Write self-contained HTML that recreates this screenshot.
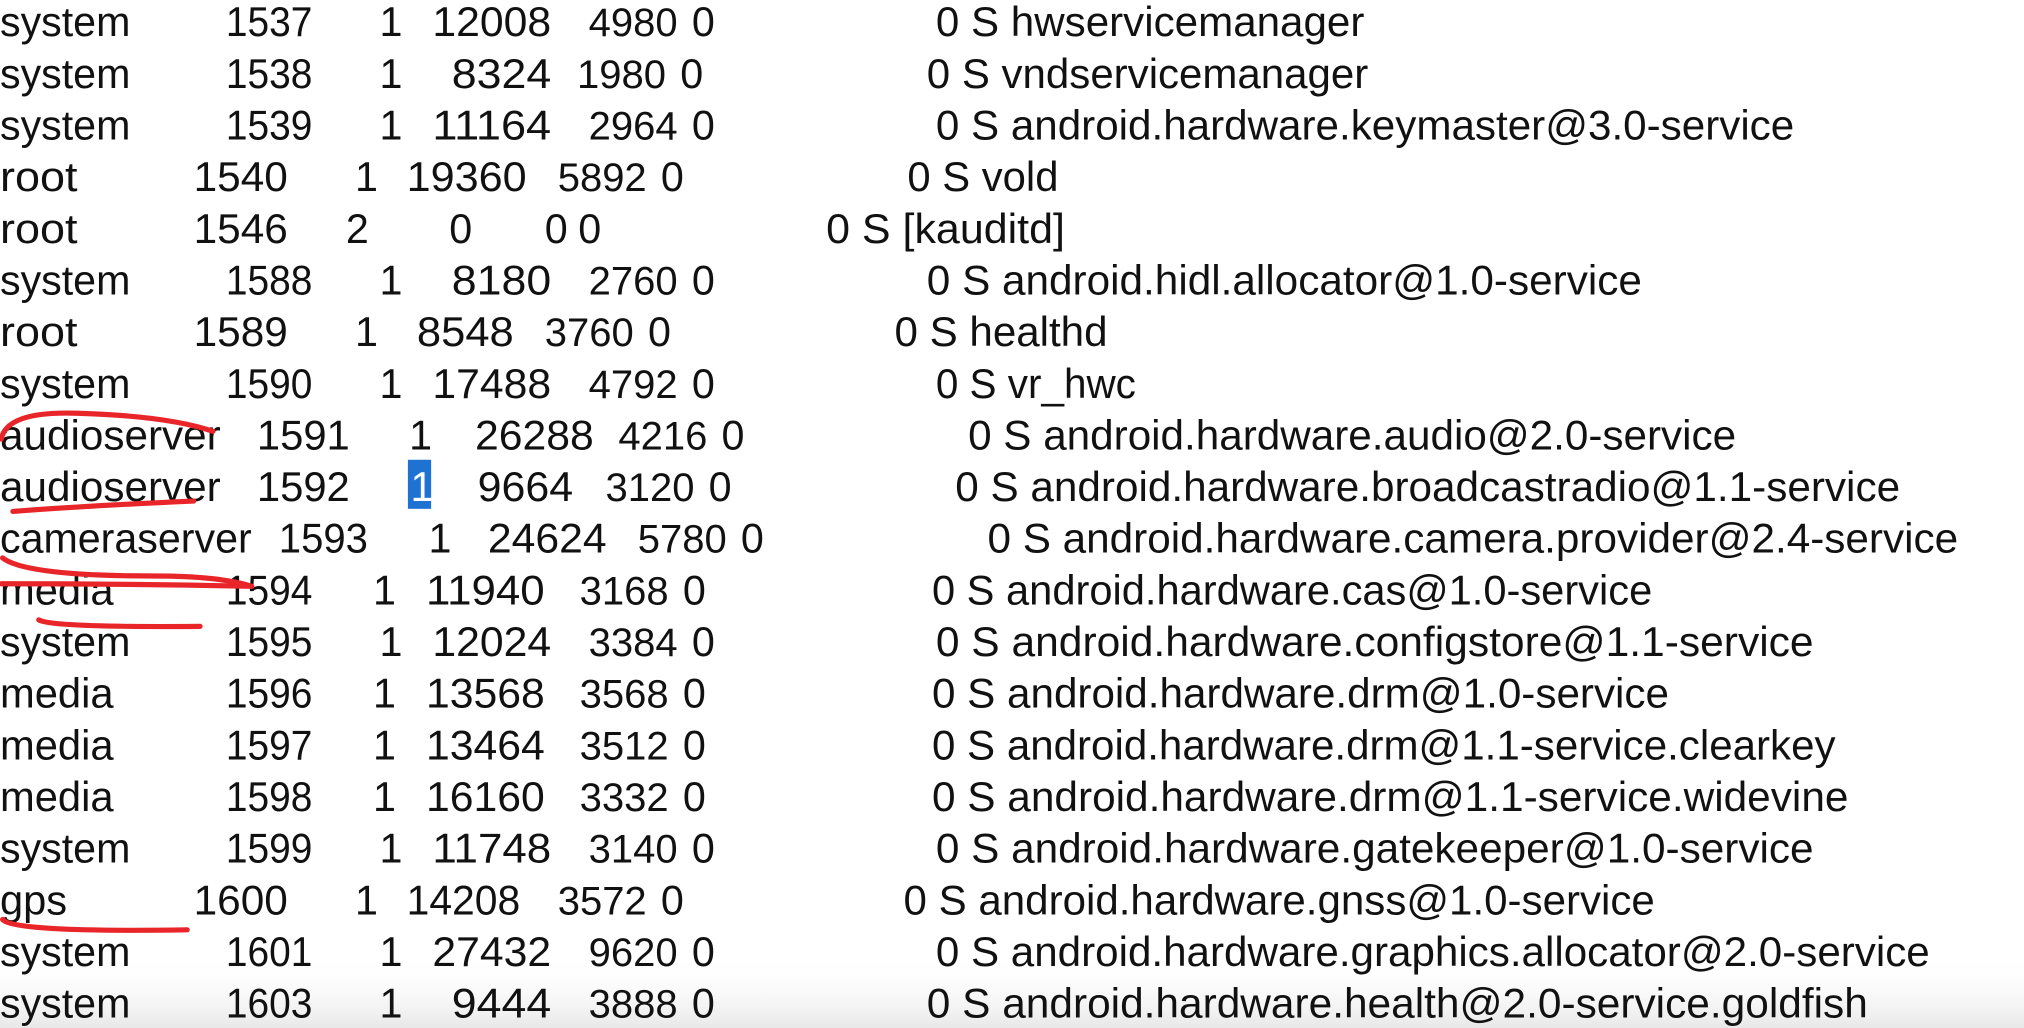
<!DOCTYPE html>
<html><head><meta charset="utf-8"><style>
html,body{margin:0;padding:0;background:#fff;width:2024px;height:1028px;overflow:hidden}
svg{display:block}
text{font-family:"Liberation Sans","Noto Sans CJK SC",sans-serif;font-size:32px;fill:#111}
.m{font-size:31px;text-anchor:end}
</style></head><body>
<svg width="2024" height="1028" viewBox="0 0 1568 796" preserveAspectRatio="none">
<defs><linearGradient id="g" x1="0" y1="0" x2="0" y2="1"><stop offset="0" stop-color="#fff" stop-opacity="0"/><stop offset="1" stop-color="#e8e8e8"/></linearGradient></defs>
<rect x="0" y="740" width="1568" height="56" fill="url(#g)"/>
<rect x="316" y="356" width="18" height="38" fill="#1e73d2"/>
<g>
<text x="0" y="28" textLength="101" lengthAdjust="spacingAndGlyphs">system</text><text x="175" y="28" textLength="67" lengthAdjust="spacingAndGlyphs">1537</text><text x="294" y="28">1</text><text x="335" y="28" textLength="92" lengthAdjust="spacingAndGlyphs">12008</text><text class="m" x="525" y="28">4980</text><text x="536" y="28">0</text><text x="725" y="28" textLength="332" lengthAdjust="spacingAndGlyphs">0 S hwservicemanager</text>
<text x="0" y="68" textLength="101" lengthAdjust="spacingAndGlyphs">system</text><text x="175" y="68" textLength="67" lengthAdjust="spacingAndGlyphs">1538</text><text x="294" y="68">1</text><text x="350" y="68" textLength="77" lengthAdjust="spacingAndGlyphs">8324</text><text class="m" x="516" y="68">1980</text><text x="527" y="68">0</text><text x="718" y="68" textLength="342" lengthAdjust="spacingAndGlyphs">0 S vndservicemanager</text>
<text x="0" y="108" textLength="101" lengthAdjust="spacingAndGlyphs">system</text><text x="175" y="108" textLength="67" lengthAdjust="spacingAndGlyphs">1539</text><text x="294" y="108">1</text><text x="335" y="108" textLength="92" lengthAdjust="spacingAndGlyphs">11164</text><text class="m" x="525" y="108">2964</text><text x="536" y="108">0</text><text x="725" y="108" textLength="665" lengthAdjust="spacingAndGlyphs">0 S android.hardware.keymaster@3.0-service</text>
<text x="0" y="148" textLength="60" lengthAdjust="spacingAndGlyphs">root</text><text x="150" y="148" textLength="73" lengthAdjust="spacingAndGlyphs">1540</text><text x="275" y="148">1</text><text x="315" y="148" textLength="93" lengthAdjust="spacingAndGlyphs">19360</text><text class="m" x="501" y="148">5892</text><text x="512" y="148">0</text><text x="703" y="148" textLength="117" lengthAdjust="spacingAndGlyphs">0 S vold</text>
<text x="0" y="188" textLength="60" lengthAdjust="spacingAndGlyphs">root</text><text x="150" y="188" textLength="73" lengthAdjust="spacingAndGlyphs">1546</text><text x="268" y="188">2</text><text x="348" y="188">0</text><text x="422" y="188">0</text><text x="448" y="188">0</text><text x="640" y="188" textLength="185" lengthAdjust="spacingAndGlyphs">0 S [kauditd]</text>
<text x="0" y="228" textLength="101" lengthAdjust="spacingAndGlyphs">system</text><text x="175" y="228" textLength="67" lengthAdjust="spacingAndGlyphs">1588</text><text x="294" y="228">1</text><text x="350" y="228" textLength="77" lengthAdjust="spacingAndGlyphs">8180</text><text class="m" x="525" y="228">2760</text><text x="536" y="228">0</text><text x="718" y="228" textLength="554" lengthAdjust="spacingAndGlyphs">0 S android.hidl.allocator@1.0-service</text>
<text x="0" y="268" textLength="60" lengthAdjust="spacingAndGlyphs">root</text><text x="150" y="268" textLength="73" lengthAdjust="spacingAndGlyphs">1589</text><text x="275" y="268">1</text><text x="323" y="268" textLength="75" lengthAdjust="spacingAndGlyphs">8548</text><text class="m" x="491" y="268">3760</text><text x="502" y="268">0</text><text x="693" y="268" textLength="165" lengthAdjust="spacingAndGlyphs">0 S healthd</text>
<text x="0" y="308" textLength="101" lengthAdjust="spacingAndGlyphs">system</text><text x="175" y="308" textLength="67" lengthAdjust="spacingAndGlyphs">1590</text><text x="294" y="308">1</text><text x="335" y="308" textLength="92" lengthAdjust="spacingAndGlyphs">17488</text><text class="m" x="525" y="308">4792</text><text x="536" y="308">0</text><text x="725" y="308" textLength="155" lengthAdjust="spacingAndGlyphs">0 S vr_hwc</text>
<text x="0" y="348" textLength="171" lengthAdjust="spacingAndGlyphs">audioserver</text><text x="199" y="348" textLength="72" lengthAdjust="spacingAndGlyphs">1591</text><text x="317" y="348">1</text><text x="368" y="348" textLength="92" lengthAdjust="spacingAndGlyphs">26288</text><text class="m" x="548" y="348">4216</text><text x="559" y="348">0</text><text x="750" y="348" textLength="595" lengthAdjust="spacingAndGlyphs">0 S android.hardware.audio@2.0-service</text>
<text x="0" y="388" textLength="171" lengthAdjust="spacingAndGlyphs">audioserver</text><text x="199" y="388" textLength="72" lengthAdjust="spacingAndGlyphs">1592</text><text x="318" y="388" style="fill:#fff">1</text><text x="370" y="388" textLength="74" lengthAdjust="spacingAndGlyphs">9664</text><text class="m" x="538" y="388">3120</text><text x="549" y="388">0</text><text x="740" y="388" textLength="732" lengthAdjust="spacingAndGlyphs">0 S android.hardware.broadcastradio@1.1-service</text>
<text x="0" y="428" textLength="195" lengthAdjust="spacingAndGlyphs">cameraserver</text><text x="216" y="428" textLength="69" lengthAdjust="spacingAndGlyphs">1593</text><text x="332" y="428">1</text><text x="378" y="428" textLength="92" lengthAdjust="spacingAndGlyphs">24624</text><text class="m" x="563" y="428">5780</text><text x="574" y="428">0</text><text x="765" y="428" textLength="752" lengthAdjust="spacingAndGlyphs">0 S android.hardware.camera.provider@2.4-service</text>
<text x="0" y="468" textLength="88" lengthAdjust="spacingAndGlyphs">media</text><text x="175" y="468" textLength="67" lengthAdjust="spacingAndGlyphs">1594</text><text x="289" y="468">1</text><text x="330" y="468" textLength="92" lengthAdjust="spacingAndGlyphs">11940</text><text class="m" x="518" y="468">3168</text><text x="529" y="468">0</text><text x="722" y="468" textLength="558" lengthAdjust="spacingAndGlyphs">0 S android.hardware.cas@1.0-service</text>
<text x="0" y="508" textLength="101" lengthAdjust="spacingAndGlyphs">system</text><text x="175" y="508" textLength="67" lengthAdjust="spacingAndGlyphs">1595</text><text x="294" y="508">1</text><text x="335" y="508" textLength="92" lengthAdjust="spacingAndGlyphs">12024</text><text class="m" x="525" y="508">3384</text><text x="536" y="508">0</text><text x="725" y="508" textLength="680" lengthAdjust="spacingAndGlyphs">0 S android.hardware.configstore@1.1-service</text>
<text x="0" y="548" textLength="88" lengthAdjust="spacingAndGlyphs">media</text><text x="175" y="548" textLength="67" lengthAdjust="spacingAndGlyphs">1596</text><text x="289" y="548">1</text><text x="330" y="548" textLength="92" lengthAdjust="spacingAndGlyphs">13568</text><text class="m" x="518" y="548">3568</text><text x="529" y="548">0</text><text x="722" y="548" textLength="571" lengthAdjust="spacingAndGlyphs">0 S android.hardware.drm@1.0-service</text>
<text x="0" y="588" textLength="88" lengthAdjust="spacingAndGlyphs">media</text><text x="175" y="588" textLength="67" lengthAdjust="spacingAndGlyphs">1597</text><text x="289" y="588">1</text><text x="330" y="588" textLength="92" lengthAdjust="spacingAndGlyphs">13464</text><text class="m" x="518" y="588">3512</text><text x="529" y="588">0</text><text x="722" y="588" textLength="700" lengthAdjust="spacingAndGlyphs">0 S android.hardware.drm@1.1-service.clearkey</text>
<text x="0" y="628" textLength="88" lengthAdjust="spacingAndGlyphs">media</text><text x="175" y="628" textLength="67" lengthAdjust="spacingAndGlyphs">1598</text><text x="289" y="628">1</text><text x="330" y="628" textLength="92" lengthAdjust="spacingAndGlyphs">16160</text><text class="m" x="518" y="628">3332</text><text x="529" y="628">0</text><text x="722" y="628" textLength="710" lengthAdjust="spacingAndGlyphs">0 S android.hardware.drm@1.1-service.widevine</text>
<text x="0" y="668" textLength="101" lengthAdjust="spacingAndGlyphs">system</text><text x="175" y="668" textLength="67" lengthAdjust="spacingAndGlyphs">1599</text><text x="294" y="668">1</text><text x="335" y="668" textLength="92" lengthAdjust="spacingAndGlyphs">11748</text><text class="m" x="525" y="668">3140</text><text x="536" y="668">0</text><text x="725" y="668" textLength="680" lengthAdjust="spacingAndGlyphs">0 S android.hardware.gatekeeper@1.0-service</text>
<text x="0" y="708" textLength="52" lengthAdjust="spacingAndGlyphs">gps</text><text x="150" y="708" textLength="73" lengthAdjust="spacingAndGlyphs">1600</text><text x="275" y="708">1</text><text x="315" y="708" textLength="88" lengthAdjust="spacingAndGlyphs">14208</text><text class="m" x="501" y="708">3572</text><text x="512" y="708">0</text><text x="700" y="708" textLength="582" lengthAdjust="spacingAndGlyphs">0 S android.hardware.gnss@1.0-service</text>
<text x="0" y="748" textLength="101" lengthAdjust="spacingAndGlyphs">system</text><text x="175" y="748" textLength="67" lengthAdjust="spacingAndGlyphs">1601</text><text x="294" y="748">1</text><text x="335" y="748" textLength="92" lengthAdjust="spacingAndGlyphs">27432</text><text class="m" x="525" y="748">9620</text><text x="536" y="748">0</text><text x="725" y="748" textLength="770" lengthAdjust="spacingAndGlyphs">0 S android.hardware.graphics.allocator@2.0-service</text>
<text x="0" y="788" textLength="101" lengthAdjust="spacingAndGlyphs">system</text><text x="175" y="788" textLength="67" lengthAdjust="spacingAndGlyphs">1603</text><text x="294" y="788">1</text><text x="350" y="788" textLength="77" lengthAdjust="spacingAndGlyphs">9444</text><text class="m" x="525" y="788">3888</text><text x="536" y="788">0</text><text x="718" y="788" textLength="729" lengthAdjust="spacingAndGlyphs">0 S android.hardware.health@2.0-service.goldfish</text>
</g>
<g fill="none" stroke="#e8262a" stroke-width="4" stroke-linecap="round">
<path d="M1 340 Q5 318 60 320 Q130 322 165 334"/>
<path d="M10 396 Q60 392 150 388"/>
<path d="M2 432 Q20 446 120 446 Q170 446 195 454"/>
<path d="M1 452 Q100 452 195 454"/>
<path d="M30 480 Q40 486 155 485"/>
<path d="M2 712 Q10 722 145 720"/>
</g>
</svg>
</body></html>
